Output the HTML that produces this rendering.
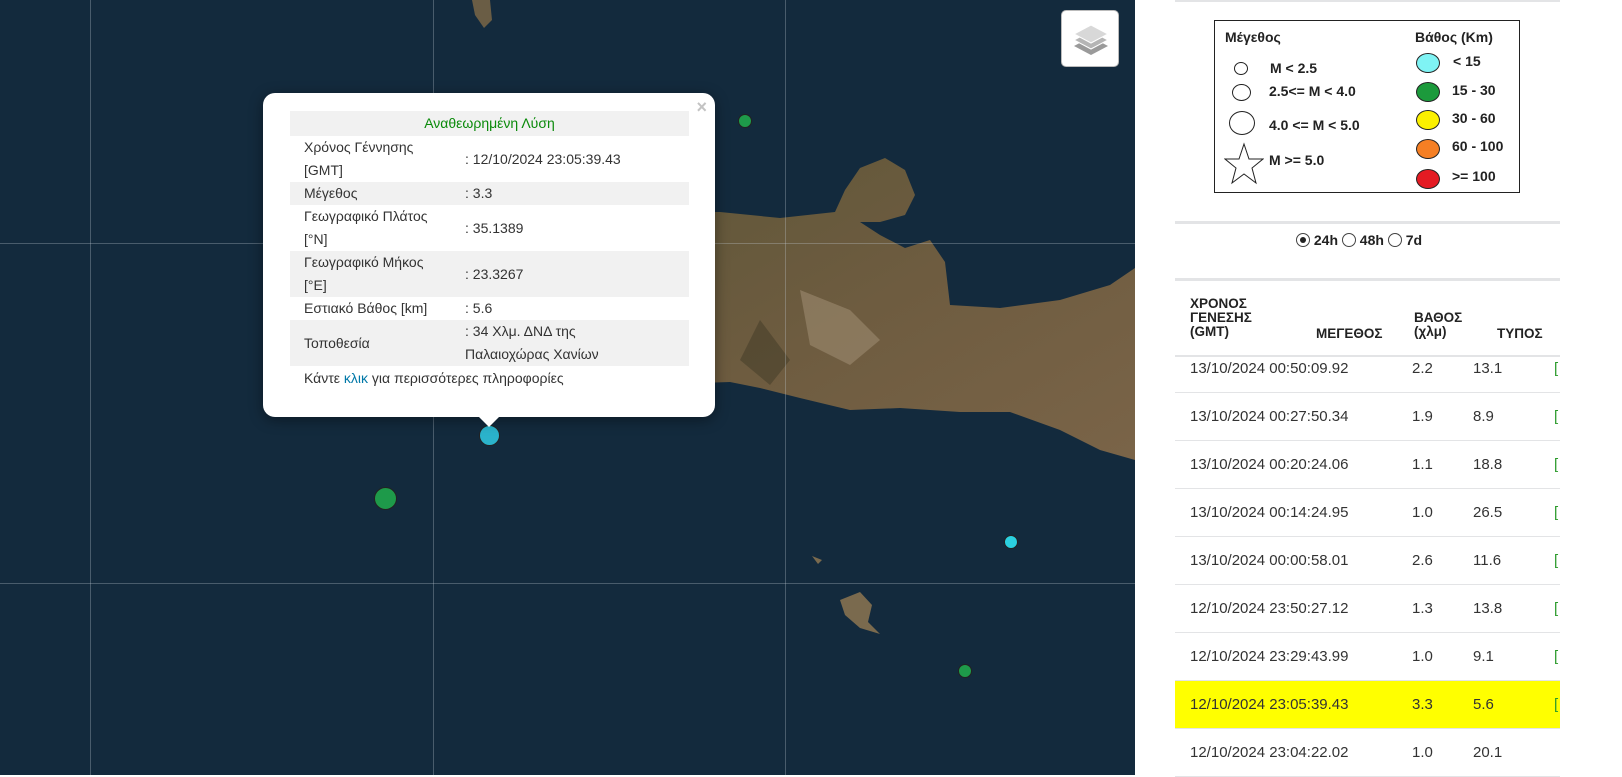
<!DOCTYPE html>
<html><head><meta charset="utf-8"><style>
*{margin:0;padding:0;box-sizing:border-box}
body{width:1622px;height:775px;overflow:hidden;position:relative;background:#fff;font-family:"Liberation Sans",sans-serif}
#map{position:absolute;left:0;top:0;width:1135px;height:775px;background:#132a3d;overflow:hidden}
.gl{position:absolute;background:rgba(200,210,220,.3)}
.btn{position:absolute;left:1061px;top:10px;width:58px;height:57px;background:#fff;border-radius:5px;border:1px solid #bbb}
.pop{position:absolute;left:263px;top:93px;width:452px;height:324px;background:#fff;border-radius:12px;box-shadow:0 3px 14px rgba(0,0,0,.4)}
.pop table{position:absolute;left:27px;top:18px;width:399px;border-collapse:collapse;font-size:14px;color:#333}
.pop td{padding:0 0 0 14px;line-height:23px;vertical-align:middle}
.g{background:#f1f1f1}
.x{position:absolute;right:8px;top:4px;color:#c3c3c3;font-size:18px;font-weight:bold}
.tip{position:absolute;left:478px;top:416px;width:0;height:0;border-left:11px solid transparent;border-right:11px solid transparent;border-top:11px solid #fff}
.m{position:absolute;border-radius:50%;border:1px solid #222}
#side{position:absolute;left:1135px;top:0;width:487px;height:775px}
.hl{position:absolute;left:40px;width:385px;background:#e3e4e6}
.leg{position:absolute;left:79px;top:20px;width:306px;height:173px;border:1.5px solid #222;font-weight:bold;font-size:14px;color:#222}
.leg div{position:absolute}
.c{border:1.5px solid #222;border-radius:50%}
.row{position:absolute;left:40px;width:385px;height:48px;border-bottom:1px solid #e3e4e6;font-size:15px;color:#333}
.row span{position:absolute;top:15px}
.hd{position:absolute;font-size:13.5px;font-weight:bold;color:#222;line-height:14px}
</style></head><body>
<div id="map">
<svg width="1135" height="775" style="position:absolute;left:0;top:0">
<defs><linearGradient id="ld" x1="0" y1="0" x2="1" y2="1"><stop offset="0" stop-color="#5e5638"/><stop offset=".5" stop-color="#6e5c40"/><stop offset="1" stop-color="#7a6448"/></linearGradient></defs>
<path d="M600,220 L660,212 L720,212 L780,218 L835,212 L845,190 L860,168 L885,158 L905,170 L915,195 L905,215 L880,222 L860,222 L880,235 L905,248 L930,240 L945,262 L950,305 L1000,308 L1060,300 L1110,285 L1135,268 L1135,460 L1100,450 L1060,430 L1010,412 L960,412 L900,408 L850,410 L800,398 L760,388 L730,382 L700,383 Z" fill="url(#ld)"/>
<path d="M800,290 L850,310 L880,340 L850,365 L810,345 Z" fill="#9c8a70" opacity=".6"/>
<path d="M760,320 L790,360 L770,385 L740,360 Z" fill="#3f3a26" opacity=".5"/>
<path d="M840,600 L860,592 L872,605 L868,622 L880,634 L860,628 L845,615 Z" fill="#7a6a4e"/>
<path d="M472,0 L490,0 L492,20 L484,28 L475,15 Z" fill="#6a5d45"/>
<path d="M812,556 L822,560 L818,564 Z" fill="#7a6a4e"/>
</svg>
<div class="gl" style="left:90px;top:0;width:1px;height:775px"></div>
<div class="gl" style="left:433px;top:0;width:1px;height:775px"></div>
<div class="gl" style="left:785px;top:0;width:1px;height:775px"></div>
<div class="gl" style="left:0;top:243px;width:1135px;height:1px"></div>
<div class="gl" style="left:0;top:583px;width:1135px;height:1px"></div>
<div class="btn"><svg width="58" height="57"><path d="M29 26 L46 35 L29 44 L12 35Z" fill="#9a9a9a"/><path d="M29 20 L46 29 L29 38 L12 29Z" fill="#b5b5b5" stroke="#fff" stroke-width="1"/><path d="M29 14 L46 23 L29 32 L12 23Z" fill="#d8d8d8" stroke="#fff" stroke-width="1"/></svg></div>
<div class="m" style="left:738px;top:114px;width:14px;height:14px;background:#1e9a4a"></div>
<div class="m" style="left:374px;top:487px;width:23px;height:23px;background:#1e9a4a"></div>
<div class="m" style="left:479px;top:425px;width:21px;height:21px;background:#2bb3cb"></div>
<div class="m" style="left:1004px;top:535px;width:14px;height:14px;background:#2bd0e0"></div>
<div class="m" style="left:958px;top:664px;width:14px;height:14px;background:#1e9a4a"></div>
<div class="pop"><span class="x">×</span>
<table>
<tr class="g"><td colspan="2" style="text-align:center;color:#0a8a0a;padding:0;line-height:25px">Αναθεωρημένη Λύση</td></tr>
<tr><td style="width:161px">Χρόνος Γέννησης<br>[GMT]</td><td>: 12/10/2024 23:05:39.43</td></tr>
<tr class="g"><td>Μέγεθος</td><td>: 3.3</td></tr>
<tr><td>Γεωγραφικό Πλάτος<br>[°N]</td><td>: 35.1389</td></tr>
<tr class="g"><td>Γεωγραφικό Μήκος<br>[°E]</td><td>: 23.3267</td></tr>
<tr><td>Εστιακό Βάθος [km]</td><td>: 5.6</td></tr>
<tr class="g"><td>Τοποθεσία</td><td>: 34 Χλμ. ΔΝΔ της<br>Παλαιοχώρας Χανίων</td></tr>
<tr><td colspan="2" style="line-height:24px">Κάντε <span style="color:#0078a8">κλικ</span> για περισσότερες πληροφορίες</td></tr>
</table></div>
<div class="tip"></div>
</div>
<div id="side">
<div class="hl" style="top:0;height:2px"></div>
<div class="leg">
<div style="left:10px;top:8px">Μέγεθος</div>
<div class="c" style="left:19px;top:41px;width:14px;height:13px;border-width:1px"></div><div style="left:55px;top:39px">M &lt; 2.5</div>
<div class="c" style="left:17px;top:63px;width:19px;height:17px;border-width:1px"></div><div style="left:54px;top:62px">2.5&lt;= M &lt; 4.0</div>
<div class="c" style="left:14px;top:90px;width:26px;height:24px;border-width:1px"></div><div style="left:54px;top:96px">4.0 &lt;= M &lt; 5.0</div>
<div style="left:9px;top:121px"><svg width="40" height="44"><path d="M20 2 L25 17 L39 17 L28 26 L32 41 L20 32 L8 41 L12 26 L1 17 L15 17Z" fill="none" stroke="#222" stroke-width="1"/></svg></div>
<div style="left:54px;top:131px">M &gt;= 5.0</div>
<div style="left:200px;top:8px">Βάθος (Km)</div>
<div class="c" style="left:201px;top:32px;width:24px;height:20px;background:#7ff3f4"></div><div style="left:238px;top:32px">&lt; 15</div>
<div class="c" style="left:201px;top:61px;width:24px;height:20px;background:#1c9a3c"></div><div style="left:237px;top:61px">15 - 30</div>
<div class="c" style="left:201px;top:89px;width:24px;height:20px;background:#fbf000"></div><div style="left:237px;top:89px">30 - 60</div>
<div class="c" style="left:201px;top:118px;width:24px;height:20px;background:#f57f24"></div><div style="left:237px;top:117px">60 - 100</div>
<div class="c" style="left:201px;top:148px;width:24px;height:20px;background:#e41b23"></div><div style="left:237px;top:147px">&gt;= 100</div>
</div>
<div class="hl" style="top:221px;height:3px"></div>
<div style="position:absolute;left:161px;top:232px;font-size:14px;font-weight:bold;color:#222">
<span style="display:inline-block;width:14px;height:14px;border:1px solid #444;border-radius:50%;vertical-align:-2px;position:relative"><span style="position:absolute;left:3px;top:3px;width:6px;height:6px;background:#222;border-radius:50%"></span></span> 24h <span style="display:inline-block;width:14px;height:14px;border:1px solid #444;border-radius:50%;vertical-align:-2px"></span> 48h <span style="display:inline-block;width:14px;height:14px;border:1px solid #444;border-radius:50%;vertical-align:-2px"></span> 7d</div>
<div class="hl" style="top:278px;height:3px"></div>
<div class="hd" style="left:55px;top:297px">ΧΡΟΝΟΣ<br>ΓΕΝΕΣΗΣ<br>(GMT)</div>
<div class="hd" style="left:181px;top:327px">ΜΕΓΕΘΟΣ</div>
<div class="hd" style="left:279px;top:311px">ΒΑΘΟΣ<br>(χλμ)</div>
<div class="hd" style="left:362px;top:327px">ΤΥΠΟΣ</div>
<div class="hl" style="top:355px;height:2px"></div>
<div class="row" style="top:345px"><span style="left:15px">13/10/2024 00:50:09.92</span><span style="left:237px">2.2</span><span style="left:298px">13.1</span><span style="left:379px;color:#2a9a2a">[</span></div>
<div class="row" style="top:393px"><span style="left:15px">13/10/2024 00:27:50.34</span><span style="left:237px">1.9</span><span style="left:298px">8.9</span><span style="left:379px;color:#2a9a2a">[</span></div>
<div class="row" style="top:441px"><span style="left:15px">13/10/2024 00:20:24.06</span><span style="left:237px">1.1</span><span style="left:298px">18.8</span><span style="left:379px;color:#2a9a2a">[</span></div>
<div class="row" style="top:489px"><span style="left:15px">13/10/2024 00:14:24.95</span><span style="left:237px">1.0</span><span style="left:298px">26.5</span><span style="left:379px;color:#2a9a2a">[</span></div>
<div class="row" style="top:537px"><span style="left:15px">13/10/2024 00:00:58.01</span><span style="left:237px">2.6</span><span style="left:298px">11.6</span><span style="left:379px;color:#2a9a2a">[</span></div>
<div class="row" style="top:585px"><span style="left:15px">12/10/2024 23:50:27.12</span><span style="left:237px">1.3</span><span style="left:298px">13.8</span><span style="left:379px;color:#2a9a2a">[</span></div>
<div class="row" style="top:633px"><span style="left:15px">12/10/2024 23:29:43.99</span><span style="left:237px">1.0</span><span style="left:298px">9.1</span><span style="left:379px;color:#2a9a2a">[</span></div>
<div class="row" style="top:681px;background:#ffff00"><span style="left:15px">12/10/2024 23:05:39.43</span><span style="left:237px">3.3</span><span style="left:298px">5.6</span><span style="left:379px;color:#2a9a2a">[</span></div>
<div class="row" style="top:729px"><span style="left:15px">12/10/2024 23:04:22.02</span><span style="left:237px">1.0</span><span style="left:298px">20.1</span></div>
</div>
</body></html>
